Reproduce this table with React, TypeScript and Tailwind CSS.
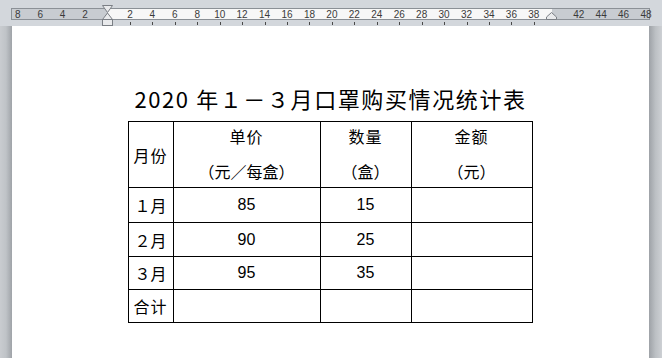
import React from 'react';

const ORIGIN = 107.5;
const UNIT = 11.22;

const LEFT_NUMS = [8, 6, 4, 2];
const MID_NUMS = Array.from({ length: 19 }, (_, i) => (i + 1) * 2);
const RIGHT_NUMS = [42, 44, 46, 48];

const ROWS = [
  { month: '１月', price: '85', qty: '15' },
  { month: '２月', price: '90', qty: '25' },
  { month: '３月', price: '95', qty: '35' },
];

const CJK = "font-['Noto_Sans_CJK_SC','Noto_Sans',sans-serif]";

function Ruler() {
  const x = (n: number) => ORIGIN + n * UNIT;
  return (
    <svg width="662" height="26" viewBox="0 0 662 26" className="block">
      <rect x="0" y="0" width="662" height="26" fill="#d3d7dc" />
      <rect x="11.5" y="8.5" width="638" height="11" fill="#c8ccd1" stroke="#8b9096" />
      <rect x="108" y="9" width="444" height="10" fill="#f7f7f7" />
      <g fontFamily="'Liberation Sans', sans-serif" fontSize="10" fill="#3a3a3a" textAnchor="middle">
        {LEFT_NUMS.map(n => <text key={`l${n}`} x={x(-n)} y="17.5">{n}</text>)}
        {MID_NUMS.map(n => <text key={`m${n}`} x={x(n)} y="17.5">{n}</text>)}
        {RIGHT_NUMS.map(n => <text key={`r${n}`} x={x(n)} y="17.5">{n}</text>)}
      </g>
      {MID_NUMS.map(n => (
        <line key={`t${n}`} x1={Math.round(x(n)) + 0.5} x2={Math.round(x(n)) + 0.5} y1="22" y2="25" stroke="#4a4a4a" />
      ))}
      {/* left indent marker */}
      <polygon points="102.5,5.5 112.5,5.5 107.5,12.5" fill="#e9eaec" stroke="#7b7f85" />
      <polygon points="107.5,13 112.5,19.5 102.5,19.5" fill="#e9eaec" stroke="#7b7f85" />
      <rect x="102.5" y="19.5" width="10" height="6" fill="#e9eaec" stroke="#7b7f85" />
      {/* right indent marker */}
      <polygon points="551.5,12.5 556.5,17 556.5,19.5 546.5,19.5 546.5,17" fill="#e9eaec" stroke="#7b7f85" />
    </svg>
  );
}

function Cell({ children, className = '' }: { children?: React.ReactNode; className?: string }) {
  return (
    <div className={`border-r border-b border-black flex items-center justify-center text-[16px] text-black ${className}`}>
      {children}
    </div>
  );
}

function HeaderCell({ top, bottom }: { top: string; bottom: string }) {
  return (
    <div className="border-r border-b border-black flex flex-col items-center pt-[3px] gap-[13px] text-[16px] text-black">
      <div className="leading-[22px] tracking-[1px]">{top}</div>
      <div className="leading-[22px]">{bottom}</div>
    </div>
  );
}

export default function App() {
  return (
    <div className={`w-[662px] h-[358px] overflow-hidden bg-[#d3d7dc] ${CJK}`}>
      <Ruler />
      <div className="flex h-[332px]">
        <div className="w-[12px] bg-gradient-to-r from-[#c9ccd0] via-[#bfc3c7] to-[#9fa3a8]" />
        <div className="flex-1 bg-white flex flex-col items-center">
          <div className="mt-[57px] h-[30px] leading-[30px] text-[22px] tracking-[1.6px] text-black">
            2020 年１－３月口罩购买情况统计表
          </div>
          <div className="mt-[8px] -ml-[1px] grid grid-cols-[45px_147px_91px_121px] grid-rows-[66px_35px_34px_33px_33px] border-t border-l border-black w-[405px]">
            <Cell className="tracking-[1px]">月份</Cell>
            <HeaderCell top="单价" bottom="（元／每盒）" />
            <HeaderCell top="数量" bottom="（盒）" />
            <HeaderCell top="金额" bottom="（元）" />
            {ROWS.map(r => (
              <React.Fragment key={r.month}>
                <Cell>{r.month}</Cell>
                <Cell className="font-['Liberation_Sans',sans-serif] text-[15px]">{r.price}</Cell>
                <Cell className="font-['Liberation_Sans',sans-serif] text-[15px]">{r.qty}</Cell>
                <Cell />
              </React.Fragment>
            ))}
            <Cell className="tracking-[1px]">合计</Cell>
            <Cell />
            <Cell />
            <Cell />
          </div>
        </div>
        <div className="w-[13px] bg-gradient-to-r from-[#9ea2a7] via-[#bcc0c4] to-[#cdd0d4]" />
      </div>
    </div>
  );
}
